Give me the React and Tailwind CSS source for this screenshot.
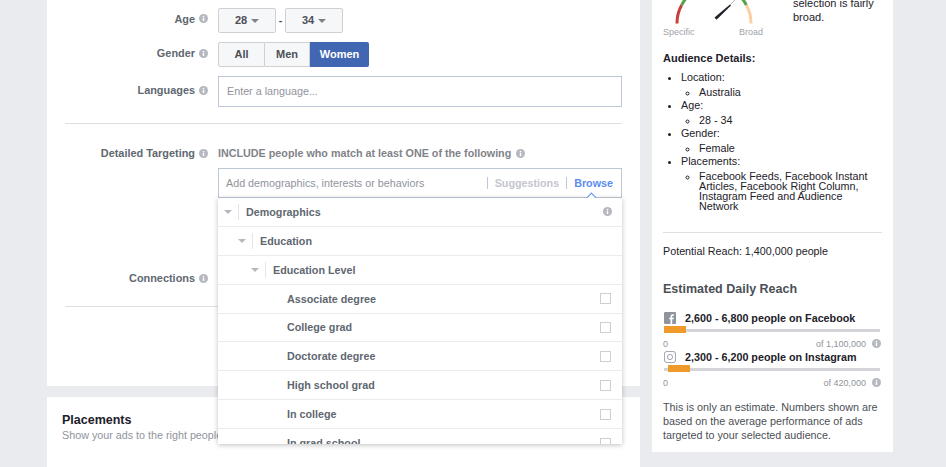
const font = { fontFamily: '"Liberation Sans", Arial, sans-serif' }

function Info({ className = '' }) {
  return (
    <svg viewBox="0 0 10 10" className={`h-[9px] w-[9px] shrink-0 ${className}`}>
      <circle cx="5" cy="5" r="5" fill="#b5b8be" />
      <rect x="4.2" y="4.2" width="1.6" height="3.6" fill="#fff" />
      <rect x="4.2" y="2.1" width="1.6" height="1.5" fill="#fff" />
    </svg>
  )
}

function Caret({ color = 'border-t-[#7f8389]' }) {
  return <span className={`inline-block h-0 w-0 border-x-[4px] border-t-[4px] border-x-transparent ${color}`} />
}

function Label({ children, className = '' }) {
  return (
    <div className={`flex w-[143px] shrink-0 items-center justify-end gap-[4px] text-[10.9px] font-bold text-[#606770] ${className}`}>
      <span>{children}</span>
      <Info />
    </div>
  )
}

function TreeRow({ pad, label, info }) {
  return (
    <div className="flex h-[28.9px] shrink-0 items-center border-b border-[#e9ebee] text-[10.75px] font-bold text-[#606770]" style={{ paddingLeft: pad }}>
      <Caret color="border-t-[#b5b8be]" />
      <span className="mx-[6px] h-[16px] w-px bg-[#e3e5e8]" />
      <span className="ml-[1px]">{label}</span>
      {info && <Info className="mr-[10px] ml-auto" />}
    </div>
  )
}

function CheckRow({ label }) {
  return (
    <div className="flex h-[28.9px] shrink-0 items-center justify-between border-b border-[#e9ebee] pr-[11px] pl-[69px] text-[10.75px] font-bold text-[#606770]">
      <span>{label}</span>
      <span className="h-[11px] w-[11px] border border-[#ccd0d5] bg-white" />
    </div>
  )
}

function Reach({ icon, text, total, orangeLeft, orangeWidth }) {
  return (
    <div>
      <div className="flex h-[14px] items-center gap-[9px] text-[10.75px] font-bold text-[#1d2129]">
        {icon}
        <span>{text}</span>
      </div>
      <div className="relative mt-[1px] h-[7px]">
        <div className="absolute top-[3px] right-[1px] left-[1px] h-[3px] bg-[#d3d5da]" />
        <div className="absolute top-0 h-[7px] bg-[#f19a2c]" style={{ left: orangeLeft, width: orangeWidth }} />
      </div>
      <div className="mt-[6px] flex h-[11px] items-center justify-between text-[9px] text-[#90949c]">
        <span>0</span>
        <span className="flex items-center gap-[6px]">
          {total}
          <Info className="-mt-[2px]" />
        </span>
      </div>
    </div>
  )
}

export default function App() {
  return (
    <div className="flex h-[467px] w-[946px] items-start gap-[12px] overflow-hidden bg-[#e9ebee] pl-[47px]" style={font}>
      {/* left column */}
      <div className="flex w-[593px] shrink-0 flex-col gap-[11px]">
        <div className="relative h-[386px] bg-white px-[18px] pt-[8px]">
          <div className="flex h-[25px] items-center gap-[10px]">
            <Label className="pb-[3px]">Age</Label>
            <div className="flex items-center text-[11px] font-bold text-[#4b4f56]">
              <button className="flex h-[25px] w-[58px] items-center justify-center gap-[4px] rounded-[2px] border border-[#ced0d4] bg-[#f6f7f9]">
                28 <Caret />
              </button>
              <span className="w-[9px] text-center">-</span>
              <button className="flex h-[25px] w-[58px] items-center justify-center gap-[4px] rounded-[2px] border border-[#ced0d4] bg-[#f6f7f9]">
                34 <Caret />
              </button>
            </div>
          </div>

          <div className="mt-[9px] flex h-[25px] items-center gap-[10px]">
            <Label className="pb-[2px]">Gender</Label>
            <div className="flex h-[25px] text-[11px] font-bold">
              <span className="flex w-[47px] items-center justify-center rounded-l-[2px] border border-[#ced0d4] bg-[#f6f7f9] text-[#4b4f56]">All</span>
              <span className="flex w-[45px] items-center justify-center border-y border-r border-[#ced0d4] bg-[#f6f7f9] text-[#4b4f56]">Men</span>
              <span className="flex w-[59px] items-center justify-center rounded-r-[2px] bg-[#4267b2] text-white">Women</span>
            </div>
          </div>

          <div className="mt-[9px] flex items-start gap-[10px]">
            <div className="flex h-[29px]"><Label>Languages</Label></div>
            <div className="flex h-[31px] w-[404px] items-center border border-[#bdc7d8] px-[8px] text-[10.75px] text-[#90949c]">Enter a language...</div>
          </div>

          <div className="mt-[16px] h-px bg-[#dddfe2]" />

          <div className="mt-[22px] flex items-start gap-[10px]">
            <div className="flex h-[15px]"><Label>Detailed Targeting</Label></div>
            <div className="w-[404px]">
              <div className="flex h-[15px] items-center gap-[5px] text-[10.75px] font-bold text-[#7f8389]">
                INCLUDE people who match at least ONE of the following <Info />
              </div>
              <div className="mt-[7px] flex h-[30px] items-center border border-[#bdc7d8] pr-[8px] pl-[7px] text-[10.75px] text-[#90949c]">
                <span className="pt-[1px]">Add demographics, interests or behaviors</span>
                <span className="ml-auto h-[12px] w-px bg-[#bdc7d8]" />
                <span className="ml-[7px] font-bold text-[#c4c7cc]">Suggestions</span>
                <span className="ml-[7px] h-[12px] w-px bg-[#bdc7d8]" />
                <span className="ml-[7px] font-bold text-[#5b8ef0]">Browse</span>
              </div>
            </div>
          </div>

          <div className="mt-[73px] flex h-[15px] items-center">
            <Label>Connections</Label>
          </div>
          <div className="mt-[20px] h-px bg-[#dddfe2]" />

          {/* browse dropdown */}
          <div className="absolute top-[198px] left-[171px] z-10 flex h-[246px] w-[404px] flex-col overflow-hidden bg-white shadow-[0_1px_5px_rgba(0,0,0,0.25)]">
            <TreeRow pad={6} label="Demographics" info />
            <TreeRow pad={20} label="Education" />
            <TreeRow pad={33} label="Education Level" />
            <CheckRow label="Associate degree" />
            <CheckRow label="College grad" />
            <CheckRow label="Doctorate degree" />
            <CheckRow label="High school grad" />
            <CheckRow label="In college" />
            <CheckRow label="In grad school" />
          </div>
          <span className="absolute top-[194px] left-[541px] z-20 h-[7px] w-[7px] rotate-45 border-t border-l border-[#5b8ef0] bg-white" />
        </div>

        <div className="h-[80px] bg-white px-[15px] pt-[15px]">
          <div className="text-[12.5px] leading-[16px] font-bold text-[#1d2129]">Placements</div>
          <div className="text-[10.75px] leading-[14px] text-[#90949c]">Show your ads to the right people</div>
        </div>
      </div>

      {/* right column */}
      <div className="h-[452px] w-[241px] shrink-0 bg-white px-[11px] text-[10.75px] text-[#1d2129]">
        <div className="flex h-[37px] items-start justify-between">
          <div className="w-[100px]">
            <svg viewBox="0 0 100 24" className="h-[24px] w-[100px]" fill="none">
              <path d="M14 23.500 A37 37 0 0 1 18.700 5" stroke="#c8403c" strokeWidth="3" />
              <path d="M18.700 5 A37 37 0 0 1 22.500 -1" stroke="#56a24c" strokeWidth="3" />
              <path d="M88 23.500 A37 37 0 0 0 83.300 5" stroke="#fbcfa0" strokeWidth="3" />
              <path d="M83.300 5 A37 37 0 0 0 79.500 -1" stroke="#56a24c" strokeWidth="3" />
              <path d="M51.500 17.500 L53.500 19.800 L68 5.500 L67 4.500 Z" fill="#1d2129" />
              <path d="M67 5 L72 0" stroke="#9ea2a8" strokeWidth="0.8" />
            </svg>
            <div className="mt-[3px] flex justify-between text-[9px] leading-[11px] text-[#a0a3a9]">
              <span>Specific</span>
              <span>Broad</span>
            </div>
          </div>
          <div className="-mt-[4px] w-[89px] text-[11px] leading-[14px]">selection is fairly<br />broad.</div>
        </div>

        <div className="mt-[14px] text-[11px] leading-[14px] font-bold">Audience Details:</div>
        <ul className="mt-[5px] list-disc pr-[8px] pl-[18px] leading-[14px]">
          <li className="mt-[4px]">Location:<ul className="mt-[1px] list-[circle] pl-[18px]"><li>Australia</li></ul></li>
          <li className="-mt-[1px]">Age:<ul className="mt-[1px] list-[circle] pl-[18px]"><li>28 - 34</li></ul></li>
          <li className="-mt-[1px]">Gender:<ul className="mt-[1px] list-[circle] pl-[18px]"><li>Female</li></ul></li>
          <li className="-mt-[1px]">Placements:
            <ul className="list-[circle] pl-[18px] leading-[10px]"><li className="pt-[3px]">Facebook Feeds, Facebook Instant Articles, Facebook Right Column, Instagram Feed and Audience Network</li></ul>
          </li>
        </ul>

        <div className="mt-[21px] h-px bg-[#dddfe2]" />
        <div className="mt-[11px] leading-[14px]">Potential Reach: 1,400,000 people</div>
        <div className="mt-[23px] text-[12.5px] leading-[16px] font-bold text-[#4b4f56]">Estimated Daily Reach</div>

        <div className="mt-[14px] flex w-[218px] flex-col">
          <Reach
            text="2,600 - 6,800 people on Facebook"
            total="of 1,100,000"
            orangeLeft={1}
            orangeWidth={22}
            icon={
              <svg viewBox="0 0 14 14" className="ml-[1px] h-[12px] w-[12px] shrink-0">
                <rect width="14" height="14" rx="1.5" fill="#8f949c" />
                <path d="M9.6 14V8.6h1.7l.3-2H9.6V5.400c0-.6.2-1 1-1h1.100V2.600c-.3 0-.9-.1-1.600-.1-1.600 0-2.500 1-2.500 2.600v1.500H6v2h1.600V14z" fill="#fff" />
              </svg>
            }
          />
          <Reach
            text="2,300 - 6,200 people on Instagram"
            total="of 420,000"
            orangeLeft={5}
            orangeWidth={22}
            icon={
              <svg viewBox="0 0 14 14" className="ml-[1px] h-[12px] w-[12px] shrink-0" fill="none" stroke="#8f949c" strokeWidth="1">
                <rect x="0.5" y="0.5" width="13" height="13" rx="3" />
                <circle cx="7" cy="7" r="3" />
                <circle cx="10.800" cy="3.200" r="0.5" fill="#8f949c" stroke="none" />
              </svg>
            }
          />
        </div>

        <p className="mt-[11px] leading-[14px] text-[#4b4f56]">
          This is only an estimate. Numbers shown are based on the average performance of ads targeted to your selected audience.
        </p>
      </div>
    </div>
  )
}
